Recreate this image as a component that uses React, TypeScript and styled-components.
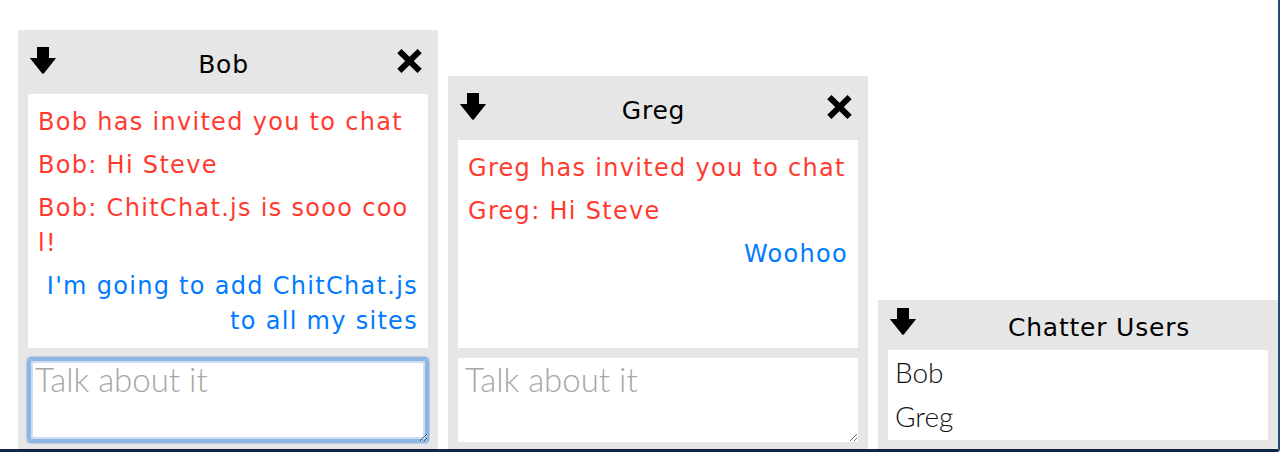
import React from "react";
import styled, { createGlobalStyle } from "styled-components";

const GlobalStyle = createGlobalStyle`
  html, body { margin: 0; padding: 0; background: #ffffff; }
  body { font-family: "DejaVu Sans", Verdana, sans-serif; }
  * { box-sizing: border-box; }
`;

const Screen = styled.div`
  width: 1280px;
  height: 452px;
  border-right: 2px solid #234b73;
  border-bottom: 3px solid #0f2644;
  border-bottom-right-radius: 3px;
  display: flex;
  align-items: flex-end;
  gap: 10px;
  padding-left: 18px;
  overflow: hidden;
  background: #ffffff;
`;

const Panel = styled.section<{ $width: number; $bottom: number }>`
  width: ${(p) => p.$width}px;
  flex: none;
  background: #e6e6e6;
  padding: 0 10px ${(p) => p.$bottom}px;
  display: flex;
  flex-direction: column;
`;

const Header = styled.header<{ $height: number }>`
  height: ${(p) => p.$height}px;
  display: flex;
  align-items: flex-start;
`;

const LeftSlot = styled.div<{ $top: number }>`
  width: 42px;
  flex: none;
  padding-left: 2px;
  padding-top: ${(p) => p.$top}px;
  display: flex;
`;

const RightSlot = styled.div<{ $top: number }>`
  width: 51px;
  flex: none;
  padding-right: 6px;
  padding-top: ${(p) => p.$top}px;
  display: flex;
  justify-content: flex-end;
`;

const Title = styled.h2<{ $top: number }>`
  flex: 1;
  margin: ${(p) => p.$top}px 0 0;
  font-family: "DejaVu Sans", Verdana, sans-serif;
  font-weight: normal;
  font-size: 25px;
  line-height: 30px;
  letter-spacing: 0.8px;
  color: #000;
  text-align: center;
  white-space: nowrap;
`;

const Messages = styled.div<{ $height: number }>`
  height: ${(p) => p.$height}px;
  background: #ffffff;
  padding: 11px 10px 10px;
  overflow: hidden;
`;

const Message = styled.p<{ $mine?: boolean }>`
  margin: 0 0 8px;
  font-family: "DejaVu Sans", Verdana, sans-serif;
  font-size: 24px;
  line-height: 35px;
  letter-spacing: 1.3px;
  word-break: break-all;
  color: ${(p) => (p.$mine ? "#007aff" : "#ff3b30")};
  text-align: ${(p) => (p.$mine ? "right" : "left")};
`;

const Composer = styled.textarea<{ $focused?: boolean }>`
  display: block;
  margin-top: 10px;
  width: 100%;
  height: 84px;
  border: none;
  border-radius: ${(p) => (p.$focused ? "3px" : "0")};
  outline: none;
  background: #ffffff;
  padding: 1px 7px;
  font-family: "Lato", "Open Sans", sans-serif;
  font-weight: 300;
  font-size: 33px;
  line-height: 40px;
  color: #333;
  caret-color: #222;
  box-shadow: ${(p) =>
    p.$focused
      ? "0 0 0 1.5px #8db6e3, inset 0 0 0 3px #8db6e3, inset 0 0 0 5px #cbdef2"
      : "none"};
  &::placeholder {
    color: #a6a6a6;
  }
`;

const UserList = styled.ul`
  list-style: none;
  margin: 0;
  height: 90px;
  background: #ffffff;
  padding: 0 7px;
`;

const UserItem = styled.li`
  font-family: "Lato", "Open Sans", sans-serif;
  font-weight: 300;
  font-size: 28px;
  line-height: 44px;
  color: #111;
`;

const DownArrow = () => (
  <svg width="26" height="27" viewBox="0 0 26 27" aria-hidden="true">
    <path d="M7 0 H19 V11 H25.3 Q26.3 11 25.6 11.8 L14 26.2 Q13 27.3 12 26.2 L0.4 11.8 Q-0.3 11 0.7 11 H7 Z" fill="#000" />
  </svg>
);

const CloseIcon = () => (
  <svg width="25" height="24" viewBox="0 0 25 24" aria-hidden="true">
    <path d="M4.5 4.2 L20.5 19.8 M20.5 4.2 L4.5 19.8" stroke="#000" strokeWidth="6" strokeLinecap="square" fill="none" />
  </svg>
);

type Msg = { text: string; mine?: boolean };

const ChatWindow: React.FC<{
  name: string;
  messages: Msg[];
  height: number;
  focused?: boolean;
}> = ({ name, messages, height, focused }) => (
  <Panel $width={420} $bottom={7}>
    <Header $height={64}>
      <LeftSlot $top={17}>
        <DownArrow />
      </LeftSlot>
      <Title $top={20}>{name}</Title>
      <RightSlot $top={19}>
        <CloseIcon />
      </RightSlot>
    </Header>
    <Messages $height={height}>
      {messages.map((m, i) => (
        <Message key={i} $mine={m.mine}>
          {m.text}
        </Message>
      ))}
    </Messages>
    <Composer placeholder="Talk about it" $focused={focused} autoFocus={focused} />
  </Panel>
);

export default function App() {
  return (
    <>
      <GlobalStyle />
      <Screen>
        <ChatWindow
          name="Bob"
          height={254}
          focused
          messages={[
            { text: "Bob has invited you to chat" },
            { text: "Bob: Hi Steve" },
            { text: "Bob: ChitChat.js is sooo cool!" },
            { text: "I'm going to add ChitChat.js to all my sites", mine: true },
          ]}
        />
        <ChatWindow
          name="Greg"
          height={208}
          messages={[
            { text: "Greg has invited you to chat" },
            { text: "Greg: Hi Steve" },
            { text: "Woohoo", mine: true },
          ]}
        />
        <Panel $width={400} $bottom={9}>
          <Header $height={50}>
            <LeftSlot $top={8}>
              <DownArrow />
            </LeftSlot>
            <Title $top={13}>Chatter Users</Title>
          </Header>
          <UserList>
            <UserItem>Bob</UserItem>
            <UserItem>Greg</UserItem>
          </UserList>
        </Panel>
      </Screen>
    </>
  );
}
